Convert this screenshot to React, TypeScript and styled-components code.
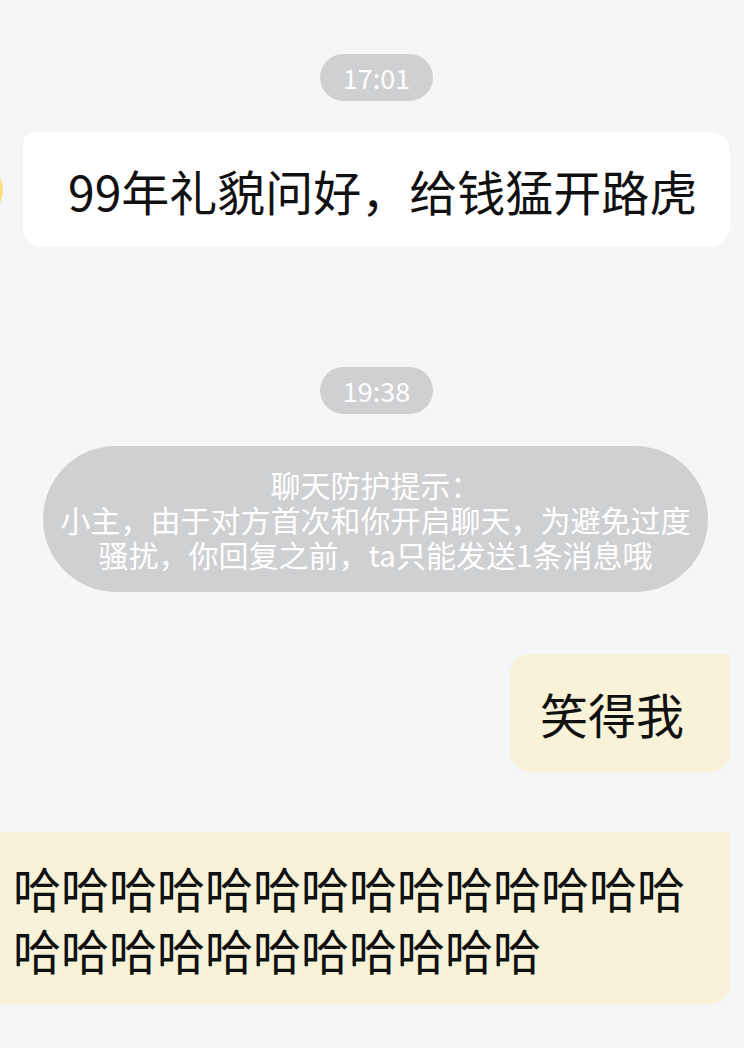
import styled, { createGlobalStyle } from "styled-components";

const GlobalStyle = createGlobalStyle`
  body {
    margin: 0;
    background: #f5f6f8;
    overflow-x: hidden;
    font-family: "Noto Sans CJK SC", "Noto Sans", sans-serif;
  }
`;

const App = () => {
  return (
    <>
      <GlobalStyle />
      <Chat>
        <TimePill>17:01</TimePill>
        <Row $gap={31}>
          <Avatar />
          <Bubble $tone="white">99年礼貌问好，给钱猛开路虎</Bubble>
        </Row>

        <TimePill $gap={120}>19:38</TimePill>
        <Notice>
          <NoticeLine>聊天防护提示：</NoticeLine>
          <NoticeLine>小主，由于对方首次和你开启聊天，为避免过度</NoticeLine>
          <NoticeLine>骚扰，你回复之前，ta只能发送1条消息哦</NoticeLine>
        </Notice>

        <Row $gap={62} $mine>
          <Bubble $tone="yellow" $mine>
            笑得我
          </Bubble>
        </Row>

        <LongBubble>{"哈".repeat(25)}</LongBubble>
      </Chat>
    </>
  );
};

const Chat = styled.main`
  display: flex;
  flex-direction: column;
  min-height: 1048px;
  box-sizing: border-box;
  padding: 54px 14px 0 23px;
`;

const TimePill = styled.div<{ $gap?: number }>`
  align-self: center;
  margin-top: ${(p) => p.$gap ?? 0}px;
  height: 47px;
  padding: 0 23px;
  border-radius: 24px;
  background: #cfd0d2;
  color: #fff;
  font-size: 27px;
  line-height: 47px;
`;

const Row = styled.div<{ $gap: number; $mine?: boolean }>`
  display: flex;
  align-items: center;
  justify-content: ${(p) => (p.$mine ? "flex-end" : "flex-start")};
  margin-top: ${(p) => p.$gap}px;
`;

const Avatar = styled.div`
  flex: none;
  width: 56px;
  height: 56px;
  margin-left: -76px;
  margin-right: 20px;
  border-radius: 50%;
  background: #f6e27e;
`;

const Bubble = styled.div<{ $tone: "white" | "yellow"; $mine?: boolean }>`
  flex: ${(p) => (p.$mine ? "none" : "1")};
  background: ${(p) => (p.$tone === "white" ? "#ffffff" : "#f8f3d8")};
  color: #111;
  font-size: 48px;
  line-height: 48px;
  border-radius: ${(p) => (p.$mine ? "20px 4px 20px 20px" : "12px 20px 20px 20px")};
  padding: ${(p) => (p.$mine ? "35px 46px 35px 30px" : "34px 20px 33px 45px")};
  white-space: nowrap;
`;

const Notice = styled.div`
  display: flex;
  flex-direction: column;
  align-items: center;
  margin: 32px 22px 0 20px;
  padding: 21px 8px 20px;
  border-radius: 73px;
  background: #cfd0d2;
  color: #fff;
  font-size: 30px;
  line-height: 35px;
`;

const NoticeLine = styled.div`
  height: 35px;
  white-space: nowrap;
`;

const LongBubble = styled.div`
  margin: 60px 0 0 -43px;
  padding: 24px 40px 24px 33px;
  border-radius: 20px 4px 20px 20px;
  background: #f8f3d8;
  color: #111;
  font-size: 48px;
  line-height: 62px;
  word-break: break-all;
`;

export default App;
